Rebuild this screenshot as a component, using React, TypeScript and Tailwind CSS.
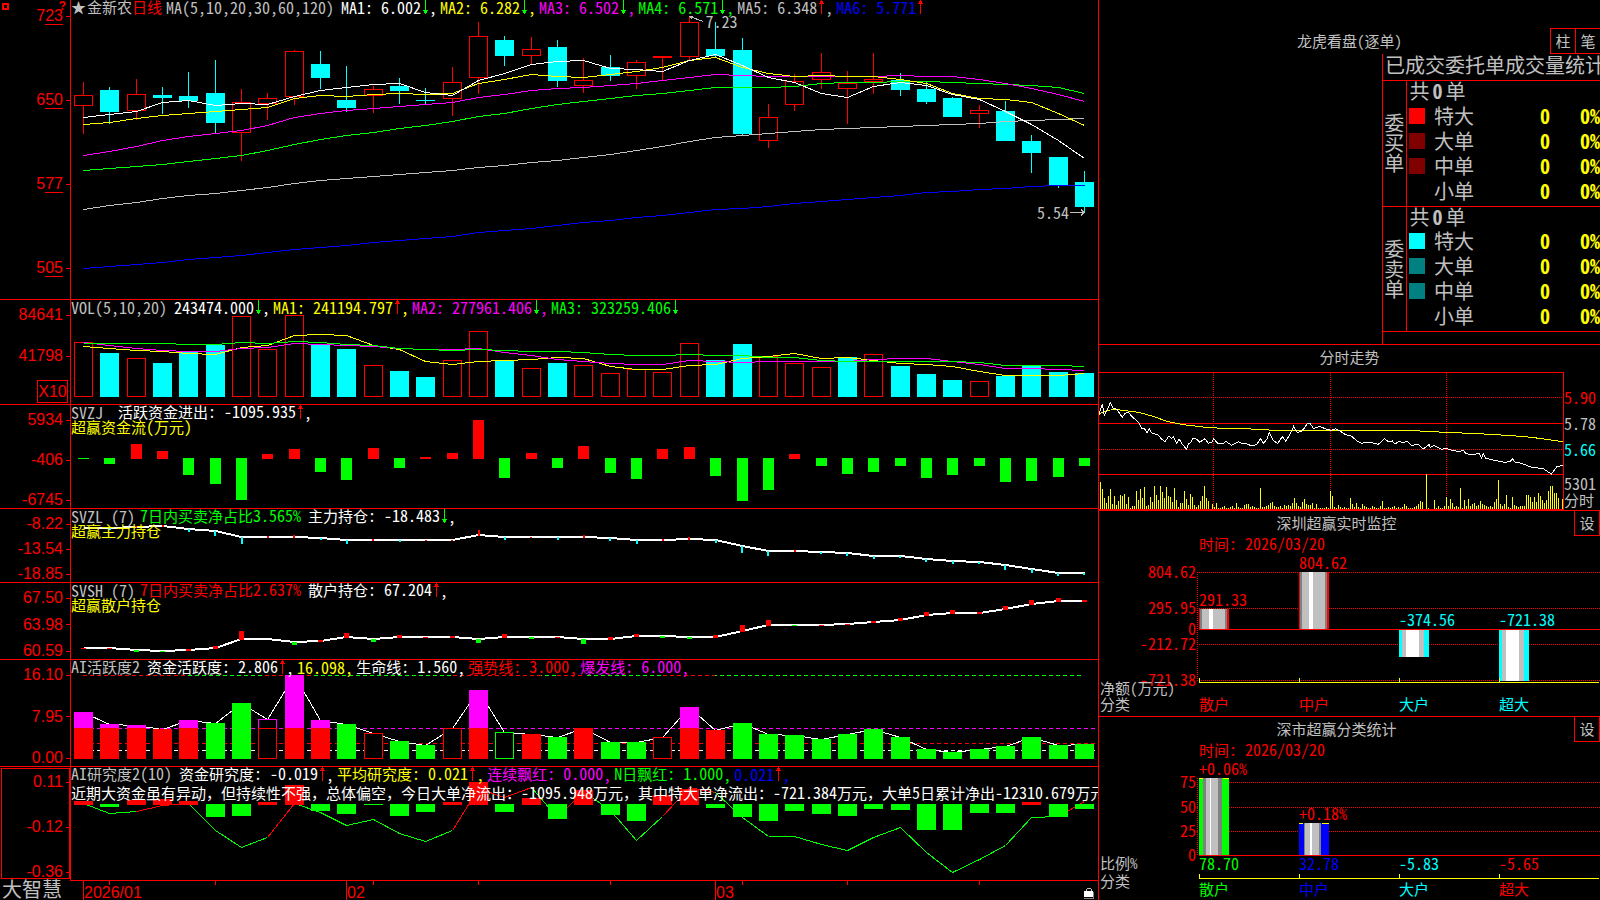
import React from 'react';
import clsx from 'clsx';

type Kind = 'up' | 'down';

const PLOT_WIDTH = 1027;
const BAR_WIDTH = 19;

const barLeft = (i: number, width = BAR_WIDTH) => Math.round(12.5 + 26.34 * i - width / 2);
const barCenter = (i: number) => barLeft(i) + 9.5;

const toPoints = (values: number[]) => values.map((y, i) => `${barCenter(i)},${y + 0.5}`).join(' ');

// [body top, body bottom, high, low], up = hollow red, down = solid cyan
const candles: [number, number, number, number, Kind][] = [
  [95, 106, 82, 134, 'up'],
  [90, 112, 87, 124, 'down'],
  [94, 111, 79, 120, 'up'],
  [95, 98, 87, 114, 'down'],
  [96, 101, 72, 108, 'down'],
  [93, 123, 60, 133, 'down'],
  [102, 133, 89, 161, 'up'],
  [98, 104, 93, 120, 'up'],
  [51, 97, 50, 105, 'up'],
  [64, 78, 51, 89, 'down'],
  [100, 108, 66, 112, 'down'],
  [89, 96, 86, 113, 'up'],
  [86, 91, 78, 104, 'down'],
  [100, 101, 88, 104, 'down'],
  [82, 99, 67, 116, 'up'],
  [36, 78, 22, 94, 'up'],
  [40, 56, 36, 66, 'down'],
  [49, 56, 37, 64, 'up'],
  [47, 81, 40, 87, 'down'],
  [80, 86, 58, 93, 'up'],
  [67, 76, 55, 81, 'down'],
  [62, 76, 60, 89, 'up'],
  [56, 58, 56, 80, 'up'],
  [22, 57, 16, 60, 'up'],
  [49, 56, 22, 58, 'down'],
  [50, 134, 38, 136, 'down'],
  [117, 141, 104, 148, 'up'],
  [81, 105, 74, 111, 'up'],
  [72, 80, 53, 89, 'up'],
  [83, 89, 71, 124, 'up'],
  [79, 82, 53, 94, 'up'],
  [80, 90, 73, 96, 'down'],
  [89, 102, 81, 104, 'down'],
  [98, 117, 97, 117, 'down'],
  [110, 114, 105, 128, 'up'],
  [111, 141, 101, 141, 'down'],
  [141, 153, 135, 173, 'down'],
  [157, 185, 157, 188, 'down'],
  [182, 207, 171, 213, 'down'],
];

const priceAverages = [
  { color: '#0000ff', values: [268, 266, 264, 262, 259, 257, 255, 252, 249, 247, 245, 242, 240, 238, 236, 232, 230, 228, 225, 222, 220, 217, 215, 212, 209, 208, 206, 203, 201, 199, 197, 195, 192, 191, 189, 188, 186, 185, 185] },
  { color: '#c0c0c0', values: [209, 205, 202, 198, 195, 193, 190, 187, 183, 180, 178, 176, 174, 172, 170, 167, 165, 162, 160, 157, 154, 150, 146, 141, 137, 135, 133, 131, 129, 128, 127, 126, 125, 124, 123, 121, 120, 119, 118] },
  { color: '#00ff00', values: [170, 168, 166, 164, 161, 158, 155, 150, 144, 139, 135, 132, 128, 125, 121, 116, 113, 108, 104, 101, 98, 95, 93, 90, 87, 87, 87, 86, 83, 82, 82, 81, 81, 82, 83, 84, 85, 87, 93] },
  { color: '#ff00ff', values: [155, 151, 146, 140, 136, 133, 130, 125, 117, 113, 110, 108, 106, 104, 102, 97, 94, 90, 88, 87, 85, 83, 80, 77, 74, 75, 76, 76, 76, 76, 76, 75, 76, 76, 79, 83, 88, 94, 101] },
  { color: '#ffff00', values: [124, 122, 118, 115, 113, 111, 109, 107, 98, 95, 96, 94, 93, 94, 93, 83, 79, 74, 76, 77, 74, 71, 67, 60, 57, 67, 73, 76, 75, 76, 76, 79, 83, 93, 98, 99, 102, 113, 125] },
  { color: '#ffffff', values: [117, 114, 111, 102, 100, 105, 103, 104, 96, 90, 87, 84, 83, 92, 95, 80, 73, 64, 61, 60, 68, 69, 71, 60, 54, 65, 77, 82, 93, 97, 86, 82, 85, 94, 99, 111, 124, 140, 158] },
];

const volumes = [55, 44, 39, 34, 45, 52, 81, 48, 82, 52, 48, 32, 26, 20, 37, 66, 36, 29, 34, 32, 24, 28, 25, 54, 37, 53, 41, 34, 30, 40, 43, 31, 23, 17, 16, 21, 31, 25, 24];
const volumeKinds = 'rcrcccrrrccrccrrcrcrrrrrccrrrcrcccrcccc';

const volumeAverages = [
  { color: '#ffff00', values: [46, 48, 50, 51, 53, 54, 47, 45, 35, 34, 35, 45, 49, 61, 64, 61, 60, 59, 57, 58, 66, 69, 69, 65, 64, 58, 56, 53, 58, 57, 60, 63, 64, 66, 71, 75, 75, 75, 73] },
  { color: '#ff00ff', values: [42, 45, 48, 50, 51, 51, 48, 47, 43, 44, 45, 46, 48, 49, 49, 48, 52, 55, 59, 61, 63, 64, 64, 60, 61, 62, 61, 61, 61, 61, 59, 58, 58, 61, 64, 68, 68, 69, 70] },
  { color: '#00ff00', values: [43, 43, 43, 43, 44, 44, 42, 43, 41, 42, 44, 45, 48, 49, 50, 49, 50, 51, 51, 52, 54, 55, 55, 54, 55, 55, 57, 57, 60, 61, 61, 61, 61, 61, 62, 65, 65, 65, 66] },
];

const fundFlow = [-1, -6, 15, 8, -17, -26, -42, 5, 10, -14, -22, 11, -10, 2, 6, 39, -20, 6, -10, 13, -15, -21, 10, 12, -18, -43, -32, 5, -8, -16, -14, -8, -20, -17, -8, -24, -23, -19, -8];

const mainHolding = [19, 19, 18, 17, 20, 22, 28, 28, 28, 29, 31, 31, 31, 31, 31, 26, 28, 28, 28, 28, 29, 31, 31, 30, 31, 37, 42, 42, 43, 44, 47, 47, 50, 52, 53, 56, 60, 64, 64];
const mainDelta = [0, -2, 2, 2, -3, -5, -7, 2, 3, -2, -4, 2, -2, 1, 1, 6, -3, 1, -3, 3, -3, -4, 2, 3, -3, -7, -5, 2, -2, -3, -3, -2, -3, -3, -2, -5, -4, -3, -2];

const retailHolding = [65, 65, 67, 68, 67, 65, 56, 56, 59, 58, 54, 56, 54, 54, 54, 56, 54, 54, 54, 56, 56, 53, 53, 54, 54, 48, 42, 42, 42, 41, 39, 37, 32, 30, 30, 26, 21, 18, 18];
const retailDelta = [1, 1, -2, -1, 2, 3, 9, 0, -3, 2, 5, -3, 3, 1, 2, -4, 4, -2, 1, -5, 3, 3, -2, -2, 3, 7, 6, -1, 1, 1, 2, 3, 4, 4, 2, 4, 5, 4, 2];

const activity = [47, 35, 34, 30, 39, 36, 56, 40, 84, 39, 35, 26, 18, 14, 31, 69, 27, 25, 22, 31, 17, 17, 22, 52, 29, 36, 25, 24, 20, 25, 30, 22, 10, 7, 10, 13, 22, 14, 15];
// upper case = solid, lower case = hollow
const activityKinds = 'RRRRRGGrRRGrGGrRgRGRGGrRRGGGGGGGGGGGGGG';

const research = [4, -3, 5, 6, 4, -13, -12, 3, 20, -7, -10, -1, -12, -8, 3, 23, -8, 7, -15, 15, -11, -17, 10, 16, -4, -13, -17, -7, -10, -12, -5, -6, -26, -26, -9, -9, 3, -13, -5];
const researchLine = [36, 46, 44, 38, 36, 63, 80, 70, 36, 45, 58, 52, 66, 74, 63, 21, 30, 20, 50, 24, 43, 73, 49, 20, 25, 50, 69, 69, 77, 83, 70, 60, 85, 105, 92, 78, 50, 49, 34];
const researchRising = [2, 3, 7, 14, 15, 16, 18, 22, 23, 37];

const isCjk = /[\u2e80-\uffef]/;

const Txt: React.FC<{ children: string; className?: string }> = ({ children, className }) => (
  <span className={clsx('whitespace-pre', className)}>
    {children.split(/([\u2e80-\uffef]+)/).map((part, i) =>
      isCjk.test(part) ? (
        <span key={i} className="text-[15px] [font-feature-settings:normal]">
          {part}
        </span>
      ) : (
        part
      )
    )}
  </span>
);

const Arrow: React.FC<{ dir: Kind }> = ({ dir }) => (
  <svg className="h-[14px] w-2 shrink-0" viewBox="0 0 8 14" shapeRendering="crispEdges" aria-hidden="true">
    {dir === 'up' ? (
      <path d="M4 0h1v1h1v2h1v1H5v10H4V4H2V3h1V1h1z" fill="#ff0000" />
    ) : (
      <path d="M4 14h1v-1h1v-2h1v-1H5V0H4v10H2v1h1v2h1z" fill="#00ff00" />
    )}
  </svg>
);

interface Reading {
  text: string;
  color: string;
  dir?: Kind;
  last?: boolean;
}

const Readings: React.FC<{ title: React.ReactNode; items: Reading[] }> = ({ title, items }) => (
  <div className="flex h-[13px] items-center gap-[3px]">
    <span className="mr-1 flex items-center text-[#c0c0c0]">{title}</span>
    {items.map((item) => (
      <span key={item.text + item.color} className={clsx('flex items-center', item.color)}>
        <Txt>{item.text}</Txt>
        {item.dir && <Arrow dir={item.dir} />}
        {!item.last && <Txt>,</Txt>}
      </span>
    ))}
  </div>
);

const Caption: React.FC<{ children: string }> = ({ children }) => (
  <div className="h-4 leading-4 text-[#ffff00]">
    <Txt>{children}</Txt>
  </div>
);

const AxisLabel: React.FC<{ children: React.ReactNode }> = ({ children }) => (
  <div className="flex h-4 items-center justify-end gap-[3px]">
    <span>{children}</span>
    <span className="h-px w-1 bg-[#ff0000]" />
  </div>
);

interface PanelProps {
  axis: React.ReactNode;
  viewHeight: number;
  className: string;
  axisClass?: string;
  chart: React.ReactNode;
  children: React.ReactNode;
}

const Panel: React.FC<PanelProps> = ({ axis, viewHeight, className, axisClass = 'pt-[7px]', chart, children }) => (
  <section className={clsx('flex border-[#ff0000]', className)}>
    <div
      className={clsx(
        'flex w-[71px] shrink-0 flex-col justify-between border-r border-[#ff0000] font-["Liberation_Sans",sans-serif] text-base leading-4 text-[#ff0000]',
        axisClass
      )}
    >
      {axis}
    </div>
    <div className="relative min-w-0 flex-1 overflow-hidden">
      <svg
        className="absolute inset-0 h-full w-full"
        viewBox={`0 0 ${PLOT_WIDTH} ${viewHeight}`}
        preserveAspectRatio="none"
        shapeRendering="crispEdges"
        fill="none"
      >
        {chart}
      </svg>
      <div className="relative">{children}</div>
    </div>
  </section>
);

const Averages: React.FC<{ lines: { color: string; values: number[] }[] }> = ({ lines }) => (
  <>
    {lines.map((line) => (
      <polyline key={line.color} points={toPoints(line.values)} stroke={line.color} />
    ))}
  </>
);

const HollowBar: React.FC<{ x: number; y: number; height: number; color: string }> = ({ x, y, height, color }) => (
  <rect x={x + 0.5} y={y + 0.5} width={BAR_WIDTH - 1} height={height - 1} stroke={color} />
);

const PricePanel = () => (
  <Panel
    className="min-h-[299px] flex-1"
    axisClass="relative pt-2 pb-[23px]"
    viewHeight={299}
    axis={
      <>
        <span className="absolute top-[3px] left-[2px] size-[7px] border-2 border-[#ff0000]" />
        <span className="absolute top-0 right-1 text-xs leading-3 font-bold">?</span>
        {['723', '650', '577', '505'].map((label) => (
          <AxisLabel key={label}>
            {label[0]}
            <span className="border-b border-[#ff0000]">{label.slice(1)}</span>
          </AxisLabel>
        ))}
      </>
    }
    chart={
      <>
        {candles.map(([top, bottom, high, low, kind], i) => {
          const x = barLeft(i);
          return kind === 'down' ? (
            <g key={i} fill="#00ffff">
              <rect x={x + 9} y={high} width={1} height={low - high} />
              <rect x={x} y={top} width={BAR_WIDTH} height={bottom - top} />
            </g>
          ) : (
            <g key={i}>
              <rect x={x + 9} y={high} width={1} height={top - high} fill="#ff0000" />
              <rect x={x + 9} y={bottom} width={1} height={low - bottom} fill="#ff0000" />
              <HollowBar x={x} y={top} height={bottom - top} color="#ff0000" />
            </g>
          );
        })}
        <Averages lines={priceAverages} />
        <path d="M618.5 16.5l14 5M618.5 16.5l3 3M618.5 16.5h3M999 212.5h14M1010 209.5l3 3l-3 3" stroke="#c0c0c0" />
      </>
    }
  >
    <Readings
      title={
        <>
          <span className="w-4 text-[15px]">★</span>
          <Txt>金新农</Txt>
          <Txt className="mr-1 text-[#ff0000]">日线</Txt>
          <Txt>MA(5,10,20,30,60,120)</Txt>
        </>
      }
      items={[
        { text: 'MA1: 6.002', color: 'text-white', dir: 'down' },
        { text: 'MA2: 6.282', color: 'text-[#ffff00]', dir: 'down' },
        { text: 'MA3: 6.502', color: 'text-[#ff00ff]', dir: 'down' },
        { text: 'MA4: 6.571', color: 'text-[#00ff00]', dir: 'down' },
        { text: 'MA5: 6.348', color: 'text-[#c0c0c0]', dir: 'up' },
        { text: 'MA6: 5.771', color: 'text-[#0000ff]', dir: 'up', last: true },
      ]}
    />
    <span className="absolute top-[13px] left-[61%] px-2 text-[#c0c0c0]">7.23</span>
    <span className="absolute top-[204px] right-[29px] text-[#c0c0c0]">5.54</span>
  </Panel>
);

const VolumePanel = () => (
  <Panel
    className="h-[105px] border-t"
    viewHeight={104}
    axis={
      <>
        <div className="flex flex-col gap-[25px]">
          <AxisLabel>84641</AxisLabel>
          <AxisLabel>41798</AxisLabel>
        </div>
        <span className="mr-[2px] mb-px flex h-[23px] w-[31px] items-center justify-center self-end border border-[#ff0000]">
          X10
        </span>
      </>
    }
    chart={
      <>
        {volumes.map((height, i) =>
          volumeKinds[i] === 'r' ? (
            <HollowBar key={i} x={barLeft(i)} y={97 - height} height={height} color="#ff0000" />
          ) : (
            <rect key={i} x={barLeft(i)} y={97 - height} width={BAR_WIDTH} height={height} fill="#00ffff" />
          )
        )}
        <Averages lines={volumeAverages} />
      </>
    }
  >
    <Readings
      title={<Txt>VOL(5,10,20)</Txt>}
      items={[
        { text: '243474.000', color: 'text-white', dir: 'down' },
        { text: 'MA1: 241194.797', color: 'text-[#ffff00]', dir: 'up' },
        { text: 'MA2: 277961.406', color: 'text-[#ff00ff]', dir: 'down' },
        { text: 'MA3: 323259.406', color: 'text-[#00ff00]', dir: 'down', last: true },
      ]}
    />
  </Panel>
);

const FundFlowPanel = () => (
  <Panel
    className="h-[104px] border-t"
    viewHeight={103}
    axis={['5934', '-406', '-6745'].map((label) => (
      <AxisLabel key={label}>{label}</AxisLabel>
    ))}
    chart={fundFlow.map((value, i) =>
      value > 0 ? (
        <rect key={i} x={barLeft(i, 11)} y={54 - value} width={11} height={value} fill="#ff0000" />
      ) : (
        <rect key={i} x={barLeft(i, 11)} y={53} width={11} height={-value} fill="#00ff00" />
      )
    )}
  >
    <Readings title={<Txt className="mr-2">SVZJ</Txt>} items={[{ text: '活跃资金进出: -1095.935', color: 'text-white', dir: 'up' }]} />
    <Caption>超赢资金流(万元)</Caption>
  </Panel>
);

const HoldingChart: React.FC<{ line: number[]; delta: number[]; width: number; fall: string }> = ({
  line,
  delta,
  width,
  fall,
}) => (
  <>
    <polyline points={line.map((y, i) => `${barCenter(i)},${y}`).join(' ')} stroke="#ffffff" strokeWidth={2} />
    {delta.map((value, i) => (
      <rect
        key={i}
        x={barLeft(i, width)}
        y={value > 0 ? line[i] + 1 - value : line[i]}
        width={width}
        height={Math.abs(value)}
        fill={value > 0 ? '#ff0000' : fall}
      />
    ))}
  </>
);

const MainHoldingPanel = () => (
  <Panel
    className="h-[74px] border-t"
    viewHeight={73}
    axis={['-8.22', '-13.54', '-18.85'].map((label) => (
      <AxisLabel key={label}>{label}</AxisLabel>
    ))}
    chart={<HoldingChart line={mainHolding} delta={mainDelta} width={2} fall="#00ffff" />}
  >
    <Readings
      title={
        <>
          <Txt>SVZL (7)</Txt>
          <Txt className="ml-[5px] text-[#00ff00]">7日内买卖净占比3.565%</Txt>
        </>
      }
      items={[{ text: '主力持仓: -18.483', color: 'text-white', dir: 'down' }]}
    />
    <Caption>超赢主力持仓</Caption>
  </Panel>
);

const RetailHoldingPanel = () => (
  <Panel
    className="h-[77px] border-t"
    viewHeight={76}
    axis={['67.50', '63.98', '60.59'].map((label) => (
      <AxisLabel key={label}>{label}</AxisLabel>
    ))}
    chart={<HoldingChart line={retailHolding} delta={retailDelta} width={5} fall="#00ff00" />}
  >
    <Readings
      title={
        <>
          <Txt>SVSH (7)</Txt>
          <Txt className="ml-[5px] text-[#ff0000]">7日内买卖净占比2.637%</Txt>
        </>
      }
      items={[{ text: '散户持仓: 67.204', color: 'text-white', dir: 'up' }]}
    />
    <Caption>超赢散户持仓</Caption>
  </Panel>
);

const ActivityPanel = () => (
  <Panel
    className="h-[107px] border-t"
    viewHeight={106}
    axis={['16.10', '7.95', '0.00'].map((label) => (
      <AxisLabel key={label}>{label}</AxisLabel>
    ))}
    chart={
      <>
        <path d="M12 15.5H1013" stroke="#00ff00" strokeDasharray="4 3" />
        <path d="M12 15.5H117M194 15.5H240M382 15.5H470M486 15.5H514M592 15.5H644" stroke="#000000" />
        <path d="M12 15.5H117M194 15.5H240M382 15.5H470M486 15.5H514M592 15.5H644" stroke="#ff0000" strokeDasharray="4 3" />
        <path d="M12 68.5H1027" stroke="#ff00ff" strokeDasharray="4 3" />
        <path d="M12 83.5H1027" stroke="#ff0000" strokeDasharray="4 3" />
        <path d="M12 90.5H1027" stroke="#ffffff" strokeDasharray="4 3" />
        <polyline points={toPoints(activity.map((height) => 99 - height))} stroke="#ffffff" />
        {activity.map((height, i) => {
          const kind = activityKinds[i];
          const x = barLeft(i);
          if (kind === 'r' || kind === 'g') {
            return (
              <g key={i} fill="#000000">
                {height > 31 && <HollowBar x={x} y={99 - height} height={height - 30} color="#ff00ff" />}
                <HollowBar x={x} y={99 - Math.min(height, 31)} height={Math.min(height, 31)} color={kind === 'r' ? '#ff0000' : '#00ff00'} />
              </g>
            );
          }
          return (
            <g key={i}>
              <rect x={x} y={99 - height} width={BAR_WIDTH} height={height} fill={kind === 'R' ? '#ff0000' : '#00ff00'} />
              {kind === 'R' && height > 31 && (
                <rect x={x} y={99 - height} width={BAR_WIDTH} height={height - 31} fill="#ff00ff" />
              )}
            </g>
          );
        })}
      </>
    }
  >
    <Readings
      title={<Txt>AI活跃度2</Txt>}
      items={[
        { text: '资金活跃度: 2.806', color: 'text-white', dir: 'up' },
        { text: '16.098', color: 'text-[#ffff00]' },
        { text: '生命线: 1.560', color: 'text-white' },
        { text: '强势线: 3.000', color: 'text-[#ff0000]' },
        { text: '爆发线: 6.000', color: 'text-[#ff00ff]' },
      ]}
    />
  </Panel>
);

const ResearchPanel = () => (
  <Panel
    className="h-[114px] border-t"
    axisClass="pt-[7px] outline outline-[#ff0000] -outline-offset-2"
    viewHeight={113}
    axis={['0.11', '-0.12', '-0.36'].map((label) => (
      <AxisLabel key={label}>{label}</AxisLabel>
    ))}
    chart={
      <>
        {researchLine.slice(1).map((y, i) => (
          <path
            key={i}
            d={`M${barCenter(i)} ${researchLine[i] + 0.5}L${barCenter(i + 1)} ${y + 0.5}`}
            stroke={researchRising.includes(i) ? '#ff0000' : '#00ff00'}
          />
        ))}
        {research.map((value, i) => (
          <rect
            key={i}
            x={barLeft(i)}
            y={value > 0 ? 38 - value : 37}
            width={BAR_WIDTH}
            height={Math.abs(value)}
            fill={value > 0 ? '#ff0000' : '#00ff00'}
          />
        ))}
      </>
    }
  >
    <Readings
      title={<Txt>AI研究度2(10)</Txt>}
      items={[
        { text: '资金研究度: -0.019', color: 'text-white', dir: 'up' },
        { text: '平均研究度: 0.021', color: 'text-[#ffff00]', dir: 'up' },
        { text: '连续飘红: 0.000', color: 'text-[#ff00ff]' },
        { text: 'N日飘红: 1.000', color: 'text-[#00ff00]' },
        { text: '0.021', color: 'text-[#0000ff]', dir: 'up' },
      ]}
    />
    <p className="mt-1 h-4 text-white">
      <Txt>
        近期大资金虽有异动，但持续性不强，总体偏空，今日大单净流出：-1095.948万元，其中特大单净流出：-721.384万元，大单5日累计净出-12310.679万元
      </Txt>
    </p>
  </Panel>
);

const TimeAxis = () => (
  <footer className="flex h-5">
    <div className="w-[70px] shrink-0 pl-[2px] text-[20px] leading-[18px] whitespace-nowrap text-[#c0c0c0]">大智慧</div>
    <div className="relative min-w-0 flex-1 border-t border-[#ff0000] font-['Liberation_Sans',sans-serif]">
      <svg
        className="absolute inset-0 h-full w-full"
        viewBox="0 0 1028 19"
        preserveAspectRatio="none"
        shapeRendering="crispEdges"
        stroke="#ff0000"
      >
        {[0, 10, 24].map((i) => (
          <path key={i} d={`M${barCenter(i) + 1} 0V19`} />
        ))}
        {[1, 5, 11, 15, 20, 25, 29, 34].map((i) => (
          <path key={i} d={`M${barCenter(i) + 1} 0V4`} />
        ))}
      </svg>
      <div className="relative grid h-full grid-cols-[263fr_369fr_382fr] items-center pl-[14px] text-base text-[#ff0000]">
        <span>2026/01</span>
        <span>02</span>
        <span className="flex items-center justify-between pr-1">
          03
          <svg className="h-[12px] w-[10px]" viewBox="0 0 10 12" shapeRendering="crispEdges" aria-hidden="true">
            <path d="M2 4V2h1V1h4v1h1v2H7V2H3v2z" fill="#c0c0c0" />
            <rect x="0" y="4" width="9" height="6" fill="#ffffff" />
            <path d="M9 5h1v7H0v-1h9z" fill="#808080" />
          </svg>
        </span>
      </div>
    </div>
  </footer>
);

const buyRows = [
  { name: '特大', swatch: 'bg-[#ff0000]' },
  { name: '大单', swatch: 'bg-[#800000]' },
  { name: '中单', swatch: 'bg-[#800000]' },
  { name: '小单', swatch: '' },
];

const sellRows = [
  { name: '特大', swatch: 'bg-[#00ffff]' },
  { name: '大单', swatch: 'bg-[#008080]' },
  { name: '中单', swatch: 'bg-[#008080]' },
  { name: '小单', swatch: '' },
];

const OrderGroup: React.FC<{ side: string; rows: typeof buyRows }> = ({ side, rows }) => (
  <tbody className="border-b border-[#ff0000]">
    <tr className="h-[25px] align-top">
      <th rowSpan={5} scope="rowgroup" className="w-[23px] border-r border-[#ff0000] p-0 text-center align-middle font-normal">
        {side.split('').map((char) => (
          <span key={char} className="block">
            {char}
          </span>
        ))}
      </th>
      <td colSpan={4} className="p-0 pl-[3px]">
        共<b className="px-[3px] font-bold">0</b>单
      </td>
    </tr>
    {rows.map((row) => (
      <tr key={row.name} className="h-[25px] align-top">
        <td className="w-[28px] p-0 pt-[2px] pl-[2px]">
          <span className={clsx('block size-4', row.swatch)} />
        </td>
        <th scope="row" className="p-0 text-left font-normal">
          {row.name}
        </th>
        <td className="p-0 text-right font-bold text-[#ffff00]">0</td>
        <td className="w-[50px] p-0 text-right font-bold text-[#ffff00]">0%</td>
      </tr>
    ))}
  </tbody>
);

const OrderStats = () => (
  <section className="flex flex-1 flex-col pt-[28px]">
    <header className="grid h-[26px] grid-cols-[50px_1fr_50px] items-center">
      <h2 className="col-start-2 text-center text-[15px]">
        <Txt>龙虎看盘(逐单)</Txt>
      </h2>
      <div className="flex h-full border-y border-l border-[#ff0000] text-[15px]">
        <button type="button" className="flex-1">
          柱
        </button>
        <button type="button" className="flex-1 border-l border-[#ff0000]">
          笔
        </button>
      </div>
    </header>
    <div className="ml-auto w-[218px] flex-1 overflow-hidden border-l border-[#ff0000] text-[20px] leading-5">
      <h3 className="h-[27px] border-b border-[#ff0000] pt-px pl-[2px] whitespace-nowrap">已成交委托单成交量统计</h3>
      <table className="w-full border-collapse">
        <OrderGroup side="委买单" rows={buyRows} />
        <OrderGroup side="委卖单" rows={sellRows} />
      </table>
    </div>
  </section>
);

// drawn at three units per pixel
const intradayPrice =
  '12,238 22,208 28,241 36,226 46,203 54,220 66,223 82,247 90,235 100,232 112,246 124,256 132,264 140,280 148,280 156,293 163,282 170,294 180,297 190,300 198,311 210,320 221,304 230,310 235,305 245,325 252,311 262,328 275,343 280,327 288,322 294,310 304,312 314,322 320,318 330,311 340,325 350,322 356,311 368,325 385,325 392,319 410,331 430,320 440,325 455,326 468,332 485,329 496,311 506,325 516,312 523,293 536,318 548,325 562,305 572,318 584,300 596,274 606,292 618,290 628,280 636,266 646,266 656,281 674,274 690,281 708,286 722,281 738,290 750,298 770,304 786,318 800,325 820,321 850,328 868,311 880,320 892,318 900,327 912,319 922,323 936,319 950,331 970,328 985,342 1003,328 1006,338 1016,331 1040,343 1054,340 1075,347 1095,350 1104,345 1112,355 1130,360 1152,355 1160,370 1165,356 1172,370 1200,376 1230,382 1245,380 1252,371 1260,381 1280,385 1310,397 1345,401 1369,417 1386,395 1404,391';
const intradayAverage =
  '12,238 20,232 40,226 60,223 100,228 130,232 175,244 215,259 265,269 325,276 380,280 450,281 540,286 720,287 955,287 1050,292 1150,296 1250,302 1310,307 1404,320';

const intradayVolume = [
  27, 20, 11, 6, 13, 20, 5, 13, 4, 8, 14, 13, 15, 5, 12, 1, 3, 3, 18, 9, 20, 11, 22, 3, 4, 12, 7, 23, 14, 9, 23, 17, 11, 22, 13, 12, 7, 21, 9, 2,
  6, 6, 18, 10, 4, 15, 12, 4, 2, 4, 8, 13, 23, 11, 8, 0, 5, 2, 6, 1, 1, 2, 3, 1, 1, 2, 3, 1, 6, 2, 1, 1, 4, 5, 5, 2, 3, 2, 1, 1,
  21, 2, 2, 3, 4, 6, 7, 3, 2, 2, 3, 1, 4, 3, 4, 3, 6, 11, 6, 3, 2, 7, 10, 5, 4, 4, 6, 1, 5, 1, 1, 1, 1, 2, 1, 18, 13, 2, 1, 4,
  2, 1, 2, 1, 1, 11, 5, 2, 6, 2, 1, 5, 3, 2, 1, 1, 3, 2, 1, 1, 3, 8, 1, 1, 2, 1, 2, 3, 1, 2, 1, 2, 5, 3, 1, 1, 1, 2, 3, 5,
  8, 7, 0, 35, 1, 0, 0, 9, 1, 3, 1, 1, 3, 12, 3, 10, 6, 2, 3, 2, 21, 1, 9, 3, 10, 3, 5, 6, 3, 4, 8, 5, 4, 3, 2, 3, 2, 7, 10, 29,
  5, 3, 5, 14, 2, 1, 12, 4, 3, 2, 3, 3, 3, 14, 14, 12, 7, 12, 7, 16, 13, 9, 6, 9, 18, 23, 23, 16, 16, 11, 0, 10,
];

const Intraday = () => (
  <section className="border-t border-[#ff0000]">
    <h2 className="h-[27px] pt-1 text-center text-[15px] leading-4">分时走势</h2>
    <div className="flex h-[138px]">
      <svg
        className="h-full min-w-0 flex-1 [&_*]:[vector-effect:non-scaling-stroke]"
        viewBox="12 111 1395 414"
        preserveAspectRatio="none"
        shapeRendering="crispEdges"
        fill="none"
      >
        <path d="M12 187.5H1404M12 343.5H1404M355.5 113V523M706.5 113V523M1054.5 113V523" stroke="#ff0000" strokeDasharray="1 1" />
        <path d="M12 112.5H1405.5V523.5H12M12 265.5H1404M12 418.5H1404" stroke="#ff0000" />
        {intradayVolume.map((height, i) => (
          <rect key={i} x={15 + i * 6} y={522 - height * 3} width={3} height={height * 3} fill="#ffff00" />
        ))}
        <polyline points={intradayAverage} stroke="#ffff00" />
        <polyline points={intradayPrice} stroke="#ffffff" />
      </svg>
      <div className="w-[36px] pt-[17px]">
        <div className="h-[26px] text-[#ff0000]">5.90</div>
        <div className="h-[26px]">5.78</div>
        <div className="h-[26px] text-[#00ffff]">5.66</div>
        <div className="mt-2 h-[17px]">5301</div>
        <div className="text-[15px]">分时</div>
      </div>
    </div>
  </section>
);

interface Stripe {
  width: number;
  color: string;
}

const stripes = (spec: string): Stripe[] =>
  spec.split(' ').map((part) => {
    const [width, color] = part.split('#');
    return { width: Number(width), color: `#${color}` };
  });

const redColumn = stripes('1#ff0000 2#808080 7#c0c0c0 4#ffffff 12#c0c0c0 2#808080 2#ff0000');
const cyanColumn = stripes('3#00ffff 4#c0c0c0 13#ffffff 5#c0c0c0 5#00ffff');
const greenColumn = stripes('4#00ff00 3#808080 4#c0c0c0 1#ffffff 7#c0c0c0 4#808080 7#00ff00');
const blueColumn = stripes('5#0000ff 1#808080 5#c0c0c0 2#ffffff 7#c0c0c0 2#808080 8#0000ff');

const Column: React.FC<{ x: number; y: number; height: number; parts: Stripe[] }> = ({ x, y, height, parts }) => (
  <g>
    {parts.map((part, i) => {
      const offset = parts.slice(0, i).reduce((sum, p) => sum + p.width, 0);
      return <rect key={i} x={x + offset} y={y} width={part.width} height={height} fill={part.color} />;
    })}
  </g>
);

const Label: React.FC<{ x: number; y: number; color: string; end?: boolean; cjk?: boolean; children: string }> = ({
  x,
  y,
  color,
  end,
  cjk,
  children,
}) => (
  <text x={x} y={y + 5} fill={color} textAnchor={end ? 'end' : 'start'} className={cjk ? 'text-[15px]' : 'text-base'}>
    {children}
  </text>
);

const MonitorHeader: React.FC<{ title: string }> = ({ title }) => (
  <>
    <header className="flex h-[25px]">
      <h2 className="flex-1 text-center text-[15px] leading-6">{title}</h2>
      <button type="button" className="w-[26px] border-x border-b border-[#ff0000] text-[15px]">
        设
      </button>
    </header>
    <div className="h-4 pl-[100px] leading-[14px] text-[#ff0000]">
      <Txt>时间: 2026/03/20</Txt>
    </div>
  </>
);

const NetAmount = () => (
  <section className="border-t border-[#ff0000]">
    <MonitorHeader title="深圳超赢实时监控" />
    <svg className="block h-[164px] w-full" viewBox="0 0 501 164" preserveAspectRatio="xMinYMin meet" fill="none">
      <g shapeRendering="crispEdges">
        <path d="M98 20.5H501M98 56.5H501M98 92.5H501M98 128.5H501M98.5 20V129" stroke="#ff0000" strokeDasharray="1 1" />
        <Column x={100} y={57} height={20} parts={redColumn} />
        <Column x={200} y={20} height={57} parts={redColumn} />
        <Column x={300} y={78} height={27} parts={cyanColumn} />
        <Column x={400} y={78} height={51} parts={cyanColumn} />
        <path d="M100 77.5H501" stroke="#ff0000" />
        <path d="M100.5 126V130.5H500M200.5 126V130M300.5 126V130M400.5 126V130" stroke="#ffff00" />
      </g>
      <Label x={97} y={21} color="#ff0000" end>804.62</Label>
      <Label x={97} y={57} color="#ff0000" end>295.95</Label>
      <Label x={97} y={78} color="#ff0000" end>0</Label>
      <Label x={97} y={93} color="#ff0000" end>-212.72</Label>
      <Label x={97} y={129} color="#ff0000" end>-721.38</Label>
      <Label x={100} y={49} color="#ff0000">291.33</Label>
      <Label x={200} y={12} color="#ff0000">804.62</Label>
      <Label x={300} y={69} color="#00ffff">-374.56</Label>
      <Label x={400} y={69} color="#00ffff">-721.38</Label>
      <Label x={1} y={137} color="#c0c0c0" cjk>净额(万元)</Label>
      <Label x={1} y={153} color="#c0c0c0" cjk>分类</Label>
      <Label x={100} y={153} color="#ff0000" cjk>散户</Label>
      <Label x={200} y={153} color="#ff0000" cjk>中户</Label>
      <Label x={300} y={153} color="#00ffff" cjk>大户</Label>
      <Label x={400} y={153} color="#00ffff" cjk>超大</Label>
    </svg>
  </section>
);

const CategoryRatio = () => (
  <section className="border-t border-[#ff0000]">
    <MonitorHeader title="深市超赢分类统计" />
    <svg className="block h-[142px] w-full" viewBox="0 0 501 142" preserveAspectRatio="xMinYMin meet" fill="none">
      <g shapeRendering="crispEdges">
        <path d="M98 24.5H501M98 49.5H501M98 73.5H501M98.5 20V97" stroke="#ff0000" strokeDasharray="1 1" />
        <Column x={100} y={20} height={77} parts={greenColumn} />
        <Column x={200} y={65} height={32} parts={blueColumn} />
        <path d="M100 20.5h4M124 20.5h6M200 65.5h4M223 65.5h7" stroke="#ffff00" />
        <path d="M100 97.5H501" stroke="#ff0000" />
        <path d="M100.5 116V120.5H500M200.5 116V120M300.5 116V120M400.5 116V120" stroke="#ffff00" />
      </g>
      <Label x={97} y={25} color="#ff0000" end>75</Label>
      <Label x={97} y={50} color="#ff0000" end>50</Label>
      <Label x={97} y={74} color="#ff0000" end>25</Label>
      <Label x={97} y={98} color="#ff0000" end>0</Label>
      <Label x={100} y={12} color="#ff0000">+0.06%</Label>
      <Label x={200} y={57} color="#ff0000">+0.18%</Label>
      <Label x={100} y={107} color="#00ff00">78.70</Label>
      <Label x={200} y={107} color="#0000ff">32.78</Label>
      <Label x={300} y={107} color="#00ffff">-5.83</Label>
      <Label x={400} y={107} color="#ff0000">-5.65</Label>
      <Label x={1} y={106} color="#c0c0c0" cjk>比例%</Label>
      <Label x={1} y={124} color="#c0c0c0" cjk>分类</Label>
      <Label x={100} y={132} color="#00ff00" cjk>散户</Label>
      <Label x={200} y={132} color="#0000ff" cjk>中户</Label>
      <Label x={300} y={132} color="#00ffff" cjk>大户</Label>
      <Label x={400} y={132} color="#ff0000" cjk>超大</Label>
    </svg>
  </section>
);

const App: React.FC = () => (
  <div className="flex min-h-screen overflow-hidden bg-black font-['Noto_Sans_CJK_SC',sans-serif] text-base leading-4 text-[#c0c0c0] [font-feature-settings:'hwid']">
    <main className="flex min-w-0 flex-1 flex-col">
      <PricePanel />
      <VolumePanel />
      <FundFlowPanel />
      <MainHoldingPanel />
      <RetailHoldingPanel />
      <ActivityPanel />
      <ResearchPanel />
      <TimeAxis />
    </main>
    <aside className="flex w-[502px] shrink-0 flex-col border-l border-[#ff0000]">
      <OrderStats />
      <Intraday />
      <NetAmount />
      <CategoryRatio />
    </aside>
  </div>
);

export default App;
